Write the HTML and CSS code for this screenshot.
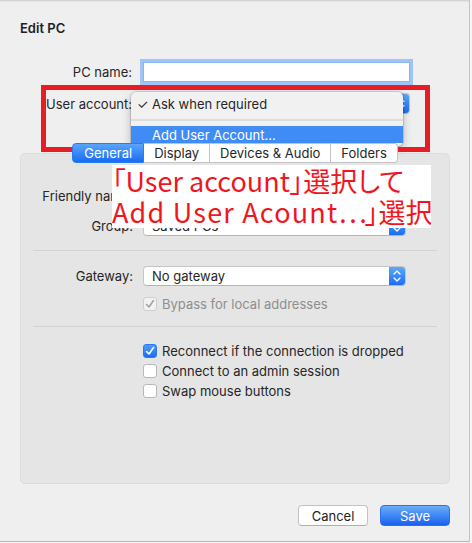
FILE: index.html
```html
<!DOCTYPE html>
<html lang="en">
<head>
  <meta charset="UTF-8" />
  <meta name="viewport" content="width=device-width, initial-scale=1.0" />
  <title>Edit PC</title>
  <link rel="stylesheet" href="styles.css">
</head>
<body>
  <!-- Sheet window -->
  <div class="sheet">
    <h1 class="sheetTitle">Edit PC</h1>

    <!-- PC name / user account -->
    <div class="topForm">
      <label class="formLabel">PC name:</label>
      <div class="textInput focused"></div>
      <label class="formLabel">User account:</label>
      <div class="popup">
        <span class="popupValue">Ask when required</span>
        <span class="popupArrows">
          <svg width="16" height="21" viewBox="0 0 16 21"><path d="M5 8.5 L8 5.5 L11 8.5 M5 12.5 L8 15.5 L11 12.5" fill="none" stroke="#fff" stroke-width="1.4" stroke-linecap="round" stroke-linejoin="round"/></svg>
        </span>
      </div>
    </div>

    <!-- Segmented tabs -->
    <div class="tabs">
      <span class="tab selected">General</span>
      <span class="tab">Display</span>
      <span class="tab">Devices &amp; Audio</span>
      <span class="tab">Folders</span>
    </div>

    <!-- General panel -->
    <div class="panel">
      <div class="panelForm">
        <label class="formLabel">Friendly name:</label>
        <div class="textInput"></div>
        <label class="formLabel">Group:</label>
        <div class="popup">
          <span class="popupValue">Saved PCs</span>
          <span class="popupArrows">
            <svg width="16" height="20" viewBox="0 0 16 20"><path d="M5 8 L8 5 L11 8 M5 12 L8 15 L11 12" fill="none" stroke="#fff" stroke-width="1.4" stroke-linecap="round" stroke-linejoin="round"/></svg>
          </span>
        </div>
      </div>
      <hr class="divider">
      <div class="panelForm">
        <label class="formLabel">Gateway:</label>
        <div class="popup">
          <span class="popupValue">No gateway</span>
          <span class="popupArrows">
            <svg width="16" height="20" viewBox="0 0 16 20"><path d="M5 8 L8 5 L11 8 M5 12 L8 15 L11 12" fill="none" stroke="#fff" stroke-width="1.4" stroke-linecap="round" stroke-linejoin="round"/></svg>
          </span>
        </div>
      </div>
      <div class="checkRow disabled bypass">
        <span class="checkbox checked"><svg width="14" height="14" viewBox="0 0 14 14"><path d="M3.5 7.5 L6 10 L10.5 3.5" fill="none" stroke="#a0a0a0" stroke-width="1.5" stroke-linecap="round" stroke-linejoin="round"/></svg></span>
        <span>Bypass for local addresses</span>
      </div>
      <hr class="divider">
      <div class="checkList">
        <div class="checkRow">
          <span class="checkbox on"><svg width="14" height="14" viewBox="0 0 14 14"><path d="M3.5 7.5 L6 10 L10.5 3.5" fill="none" stroke="#fff" stroke-width="1.6" stroke-linecap="round" stroke-linejoin="round"/></svg></span>
          <span>Reconnect if the connection is dropped</span>
        </div>
        <div class="checkRow">
          <span class="checkbox"></span>
          <span>Connect to an admin session</span>
        </div>
        <div class="checkRow">
          <span class="checkbox"></span>
          <span>Swap mouse buttons</span>
        </div>
      </div>
    </div>

    <!-- Buttons -->
    <div class="actions">
      <button class="btn">Cancel</button>
      <button class="btn primary">Save</button>
    </div>

    <!-- Open popup menu -->
    <ul class="menu">
      <li class="menuItem"><span class="menuCheck">✓</span>Ask when required</li>
      <li class="menuSep"></li>
      <li class="menuItem active"><span class="menuCheck"></span>Add User Account...</li>
    </ul>

    <!-- Annotation -->
    <div class="calloutFrame"></div>
    <div class="callout">「User account」選択して<br><span class="spaced">Add User Acount</span><span class="wide">…</span>」選択</div>
  </div>
</body>
</html>
```

FILE: styles.css
```css
/* Global */
* { box-sizing: border-box; margin: 0; padding: 0; }
body {
  font-family: Inter, Roboto, "Liberation Sans", sans-serif;
  font-size: 13px;
  color: #262626;
  background: #f6f6f6;
  width: 472px;
  height: 543px;
  overflow: hidden;
}
/* Sheet */
.sheet {
  position: relative;
  width: 470px;
  height: 542px;
  background: #efefef;
  border-right: 1px solid #c4c4c4;
  border-bottom: 1px solid #b5b5b5;
  box-shadow: inset 0 3px 2px -2px rgba(0, 0, 0, 0.15);
  padding: 21px 19px 0 20px;
}
.sheetTitle {
  font-size: 13px;
  font-weight: 600;
  line-height: 15px;
  color: #222;
}
/* Forms */
.topForm {
  display: grid;
  grid-template-columns: 112px 267px;
  column-gap: 11px;
  row-gap: 11px;
  align-items: center;
  margin-top: 26px;
}
.formLabel {
  text-align: right;
  white-space: nowrap;
}
.textInput {
  height: 20px;
  background: #fff;
  border: 1px solid #b0b0b0;
}
.textInput.focused {
  border-color: #8ab4ee;
  box-shadow: 0 0 0 3px #9ec3f6;
}
.popup {
  display: flex;
  height: 21px;
  background: #fff;
  border: 1px solid #c6c6c6;
  border-bottom-color: #b4b4b4;
  border-radius: 4px;
  overflow: hidden;
}
.popupValue {
  flex: 1;
  padding-left: 8px;
  line-height: 19px;
}
.popupArrows {
  width: 16px;
  display: flex;
  align-items: center;
  justify-content: center;
  background: linear-gradient(#5ea8fa, #1a6ef5);
}
/* Tabs */
.tabs {
  position: relative;
  z-index: 1;
  display: flex;
  justify-content: center;
  margin-top: 29px;
  margin-bottom: -10px;
}
.tab {
  height: 20px;
  line-height: 18px;
  padding: 0 10px;
  background: #fff;
  border: 1px solid #c4c4c4;
  border-left: none;
}
.tab:first-child { border-left: 1px solid #c4c4c4; border-radius: 4px 0 0 4px; }
.tab:last-child { border-radius: 0 4px 4px 0; }
.tab.selected {
  background: linear-gradient(#5aa5fa, #176cf5);
  border-color: #2b7af3;
  color: #fff;
  padding: 0 11px;
}
/* Panel */
.panel {
  height: 331px;
  background: #e5e5e5;
  border: 1px solid #dcdcdc;
  border-radius: 5px;
  padding: 31px 12px 0;
}
.panelForm {
  display: grid;
  grid-template-columns: 100px 263px;
  column-gap: 10px;
  row-gap: 10px;
  align-items: center;
}
.panelForm .textInput { height: 21px; }
.panelForm .popup { height: 20px; }
.panelForm .popupValue { line-height: 18px; }
.divider {
  border: none;
  border-top: 1px solid #d2d2d2;
  margin: 14px 0 15px;
}
/* Checkboxes */
.checkRow {
  display: flex;
  align-items: center;
  gap: 5px;
  height: 20px;
  margin-left: 110px;
}
.bypass { margin-top: 8px; margin-bottom: -2px; }
.checkRow.disabled { color: #8e8e8e; }
.checkList { margin-top: -1px; }
.checkbox {
  width: 14px;
  height: 14px;
  background: #fff;
  border: 1px solid #b8b8b8;
  border-radius: 3px;
  display: flex;
}
.checkbox svg { margin: -1px; }
.checkbox.checked { background: #f2f2f2; border-color: #cdcdcd; }
.checkbox.on {
  background: linear-gradient(#4c9cf9, #1d6ff5);
  border-color: #2c78f0;
}
/* Buttons */
.actions {
  display: flex;
  justify-content: flex-end;
  gap: 12px;
  margin-top: 21px;
}
.btn {
  width: 70px;
  height: 21px;
  font-family: inherit;
  font-size: 13px;
  color: #222;
  background: #fff;
  border: 1px solid #c2c2c2;
  border-bottom-color: #aeaeae;
  border-radius: 4px;
}
.btn.primary {
  color: #fff;
  background: linear-gradient(#69adfa, #1762f0);
  border-color: #2d6ff0;
}
/* Popup menu (open) */
.menu {
  position: absolute;
  left: 131px;
  top: 92px;
  width: 272px;
  list-style: none;
  background: #f1f1f1;
  border-radius: 5px;
  box-shadow: 0 0 0 1px rgba(0, 0, 0, 0.12), 0 3px 8px rgba(0, 0, 0, 0.25);
  padding: 3px 0;
}
.menuItem {
  display: flex;
  align-items: center;
  height: 18px;
  padding-left: 6px;
  font-size: 13px;
}
.menuCheck { width: 15px; }
.menuSep {
  height: 2px;
  margin: 6px 0 5px;
  background: #dddddd;
}
.menuItem.active {
  height: 17px;
  background: #3f8cf6;
  color: #fff;
}
/* Annotation */
.calloutFrame {
  position: absolute;
  left: 41px;
  top: 85px;
  width: 389px;
  height: 67px;
  border: 5px solid #e81c25;
}
.callout {
  position: absolute;
  left: 112px;
  top: 165px;
  width: 319px;
  height: 63px;
  background: #fff;
  color: #f0161f;
  font-family: "Noto Sans CJK JP", sans-serif;
  font-feature-settings: "palt";
  font-size: 27px;
  line-height: 31px;
  white-space: nowrap;
  overflow: hidden;
}
.callout .spaced { letter-spacing: 1.2px; }
.callout .wide { font-feature-settings: normal; letter-spacing: -2px; }
```
